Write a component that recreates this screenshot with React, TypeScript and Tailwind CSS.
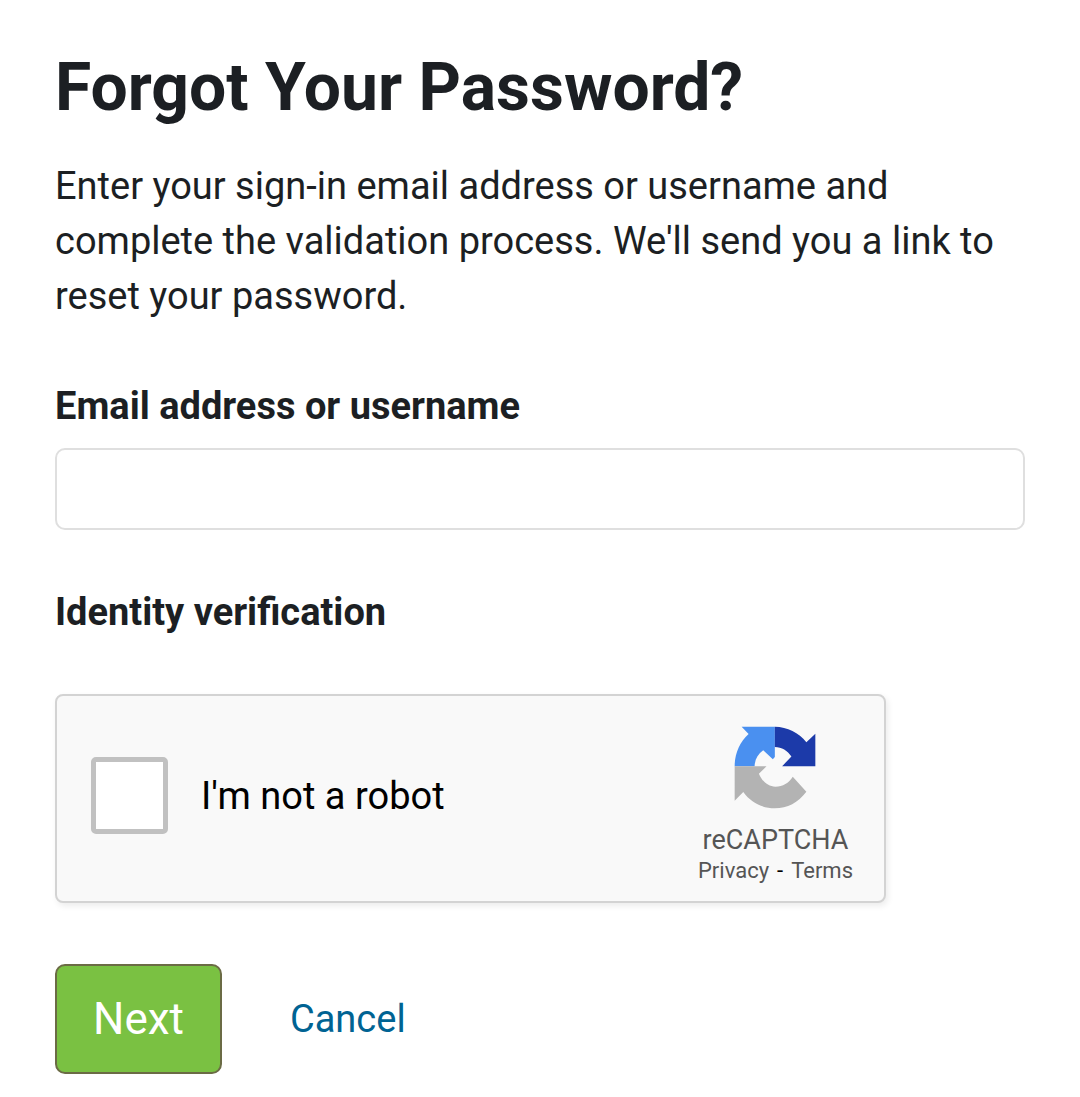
import React, { useState } from "react";

const RecaptchaLogo: React.FC = () => (
  <svg viewBox="45 39 247 250" className="w-[82px] h-[83px]" aria-hidden="true">
    <path d="M168 41H68L89 63C62 88 47 122 47 160H107C108 139 117 123 133 112L162 139L168 132Z" fill="#4a90f0" />
    <path d="M168 41C206 42 240 58 263 88L290 62V160H190L218 131C206 112 189 103 168 102Z" fill="#1c3aa9" />
    <path d="M47 160H143L120 183C130 207 148 221 170 222C192 222 210 211 222 192L263 237C238 270 206 287 168 287C130 287 96 270 73 238L47 264Z" fill="#b3b3b3" />
  </svg>
);

const Recaptcha: React.FC = () => {
  const [checked, setChecked] = useState(false);

  return (
    <div className="flex items-center justify-between w-full max-w-[831px] mt-[58px] pl-[34px] pr-[31px] pt-[30px] pb-4 rounded-lg border-2 border-[#d3d3d3] bg-[#f9f9f9] shadow-[2px_3px_6px_rgba(0,0,0,0.08)]">
      <label className="flex items-center gap-[33px] pb-5 text-[38px] leading-[48px] text-black cursor-pointer">
        <input
          type="checkbox"
          checked={checked}
          onChange={(e) => setChecked(e.target.checked)}
          className="appearance-none shrink-0 size-[77px] rounded-[5px] border-5 border-[#c1c1c1] bg-white checked:bg-[#4a90f0]"
        />
        I'm not a robot
      </label>

      <div className="flex flex-col items-center text-[#555555]">
        <RecaptchaLogo />
        <span className="mt-3.5 text-[27px] leading-[34px]">reCAPTCHA</span>
        <div className="flex gap-2 text-[22px] leading-7">
          <a href="#privacy">Privacy</a>
          <span className="text-black">-</span>
          <a href="#terms">Terms</a>
        </div>
      </div>
    </div>
  );
};

export default function App() {
  const [login, setLogin] = useState("");

  return (
    <main className="min-h-screen px-[55px] pt-12 pb-5 bg-white text-[#1c1f23] font-['Roboto',sans-serif]">
      <h1 className="text-[66px] leading-20 font-bold">Forgot Your Password?</h1>
      <p className="mt-[31px] text-[38px] leading-[55px]">
        Enter your sign-in email address or username and complete the validation process. We'll send you a link to
        reset your password.
      </p>

      <form onSubmit={(e) => e.preventDefault()}>
        <label htmlFor="login" className="block mt-[58px] text-[38px] leading-[48px] font-bold">
          Email address or username
        </label>
        <input
          id="login"
          type="text"
          value={login}
          onChange={(e) => setLogin(e.target.value)}
          className="block w-full h-[82px] mt-[18px] px-6 rounded-[10px] border-2 border-[#dfdfdf] bg-white text-[38px]"
        />

        <h2 className="mt-[58px] text-[38px] leading-[48px] font-bold">Identity verification</h2>
        <Recaptcha />

        {/* Actions */}
        <div className="flex items-center gap-[68px] mt-[61px]">
          <button
            type="submit"
            className="h-[110px] px-9 rounded-[10px] border-2 border-[#6b6b45] bg-[#7ac142] text-[44px] text-white cursor-pointer"
          >
            Next
          </button>
          <a href="#cancel" className="text-[38px] leading-[48px] text-[#006393]">
            Cancel
          </a>
        </div>
      </form>
    </main>
  );
}
